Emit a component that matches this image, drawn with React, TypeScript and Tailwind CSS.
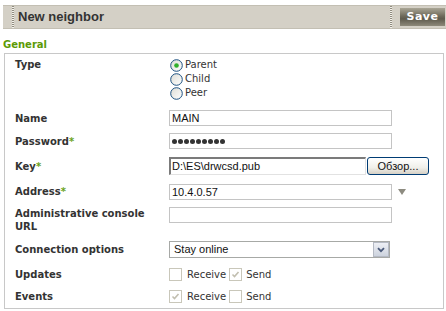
import React from "react";

function Grip({ className = "" }: { className?: string }) {
  return (
    <div
      className={`w-[2px] self-stretch bg-[repeating-linear-gradient(to_bottom,#8f8b7f_0px,#8f8b7f_1px,#f4f2ec_1px,#f4f2ec_2px)] ${className}`}
    />
  );
}

function Radio({ checked = false, label }: { checked?: boolean; label: string }) {
  return (
    <div className="flex items-center h-[14px] leading-[14px]">
      <svg width="13" height="13" viewBox="0 0 13 13" className="ml-[1px]">
        <defs>
          <linearGradient id="rbg" x1="0" y1="0" x2="1" y2="1">
            <stop offset="0" stopColor="#dcdcd5" />
            <stop offset="1" stopColor="#ffffff" />
          </linearGradient>
        </defs>
        <circle cx="6.5" cy="6.5" r="5.8" fill="url(#rbg)" stroke="#1c5180" strokeWidth="1" />
        {checked && <circle cx="6.5" cy="6.5" r="2.3" fill="#2fb02a" />}
      </svg>
      <span className="ml-[2px] text-[10px] text-[#333]">{label}</span>
    </div>
  );
}

function Check({ checked = false }: { checked?: boolean }) {
  return (
    <div className="w-[13px] h-[13px] border border-[#c9c7ba] bg-white flex items-center justify-center">
      {checked && (
        <svg width="9" height="9" viewBox="0 0 9 9">
          <path d="M1.5 4.5 L3.5 6.5 L7.5 2" fill="none" stroke="#c2bfb0" strokeWidth="1.6" />
        </svg>
      )}
    </div>
  );
}

function Row({
  label,
  star = false,
  className = "",
  labelClass = "",
  children,
}: {
  label: React.ReactNode;
  star?: boolean;
  className?: string;
  labelClass?: string;
  children: React.ReactNode;
}) {
  return (
    <div className={`flex ${className}`}>
      <div className={`w-[154px] shrink-0 font-bold text-[10px] text-[#333] ${labelClass}`}>
        {label}
        {star && <span className="text-[#6aa31a]">*</span>}
      </div>
      <div className="flex-1 flex items-center">{children}</div>
    </div>
  );
}

// inputs use an Arial-width face, closer to the original Tahoma
const field =
  "h-[16px] border border-[#c4c4c4] bg-white px-[2px] font-['Liberation_Sans',sans-serif] text-[11px] leading-[14px] text-[#111]";

export default function App() {
  return (
    <div className="w-[446px] h-[311px] bg-white overflow-hidden font-['DejaVu_Sans',sans-serif] text-[#333]">
      <div className="ml-[3px] mt-[5px] h-[24px] flex items-center bg-[#d4d0c6] border-y border-[#c3bfb3]">
        <Grip className="ml-[9px]" />
        <h1 className="ml-[4px] flex-1 font-['Liberation_Sans',sans-serif] font-bold text-[13px] text-[#333]">
          New neighbor
        </h1>
        <Grip />
        <button className="ml-[8px] mr-[1px] w-[45px] h-[18px] bg-[linear-gradient(to_bottom,#a9a595,#6e6a5b_45%,#5f5b4d_60%,#8d897a)] text-white font-bold text-[11px] leading-[18px] tracking-[0.5px]">
          Save
        </button>
      </div>

      <div className="ml-[3px] mt-[9px] font-bold text-[10px] leading-[13px] text-[#5c9a06]">General</div>

      <div className="ml-[4px] mt-[2px] w-[440px] h-[256px] border border-[#c8c8c8] pt-[4px] pl-[10px]">
        <Row label="Type" labelClass="leading-[14px]" className="items-start">
          <div className="flex flex-col">
            <Radio checked label="Parent" />
            <Radio label="Child" />
            <Radio label="Peer" />
          </div>
        </Row>

        <Row label="Name" className="mt-[10px] h-[16px] items-center">
          <div className={`${field} w-[223px]`}>MAIN</div>
        </Row>

        <Row label="Password" star className="mt-[7px] h-[16px] items-center">
          <div className={`${field} w-[223px] flex items-center gap-[1px]`}>
            {Array.from({ length: 9 }).map((_, i) => (
              <span key={i} className="w-[5px] h-[5px] rounded-full bg-[#333]" />
            ))}
          </div>
        </Row>

        <Row label="Key" star className="mt-[8px] h-[18px] items-center">
          <div className="w-[197px] h-[18px] border-t-2 border-l-2 border-b border-r border-t-[#7b7b7b] border-l-[#7b7b7b] border-b-[#e2e2e2] border-r-[#e2e2e2] bg-white pl-[1px] font-['Liberation_Sans',sans-serif] text-[11px] leading-[15px] text-[#111]">
            D:\ES\drwcsd.pub
          </div>
          <button className="ml-[1px] w-[62px] h-[18px] rounded-[3px] border border-[#003c74] bg-[linear-gradient(to_bottom,#ffffff,#f0f0ea_60%,#d6d0c5)] font-['Liberation_Sans',sans-serif] text-[11px] leading-[16px] text-[#111]">
            Обзор...
          </button>
        </Row>

        <Row label="Address" star className="mt-[9px] h-[15px] items-center">
          <div className={`${field} w-[223px] h-[15px] leading-[13px]`}>10.4.0.57</div>
          <svg width="8" height="6" viewBox="0 0 8 6" className="ml-[6px]">
            <path d="M0 0 H8 L4 6 Z" fill="#8d8b80" />
          </svg>
        </Row>

        <Row label={<>Administrative console<br />URL</>} labelClass="leading-[13px]" className="mt-[8px] items-start">
          <div className={`${field} w-[223px]`} />
        </Row>

        <Row label="Connection options" className="mt-[8px] h-[17px] items-center">
          <div className="w-[221px] h-[17px] border border-[#a7a9a6] bg-white flex items-center pl-[4px] font-['Liberation_Sans',sans-serif] text-[11px] text-[#111]">
            <span className="flex-1">Stay online</span>
            <div className="w-[16px] h-[15px] border border-[#b5bac4] bg-[linear-gradient(to_bottom,#eef0f5,#cdd3de)] flex items-center justify-center">
              <svg width="8" height="6" viewBox="0 0 8 6">
                <path d="M1 1.2 L4 4.2 L7 1.2" fill="none" stroke="#4a5a7a" strokeWidth="1.8" />
              </svg>
            </div>
          </div>
        </Row>

        <Row label="Updates" className="mt-[9px] h-[15px] items-center">
          <Check />
          <span className="ml-[5px] text-[10px] text-[#333]">Receive</span>
          <div className="ml-[3px]"><Check checked /></div>
          <span className="ml-[4px] text-[10px] text-[#333]">Send</span>
        </Row>

        <Row label="Events" className="mt-[7px] h-[15px] items-center">
          <Check checked />
          <span className="ml-[5px] text-[10px] text-[#333]">Receive</span>
          <div className="ml-[3px]"><Check /></div>
          <span className="ml-[4px] text-[10px] text-[#333]">Send</span>
        </Row>
      </div>
    </div>
  );
}
